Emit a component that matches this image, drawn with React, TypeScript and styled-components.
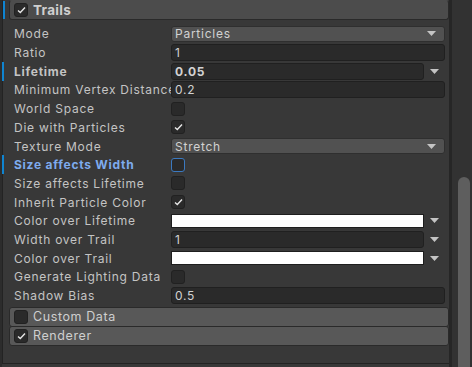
import styled, { createGlobalStyle } from "styled-components";

const Global = createGlobalStyle`
  html, body { margin: 0; padding: 0; background: #383838; }
  body { font-family: Inter, "Noto Sans", sans-serif; }
`;

const Page = styled.div`
  display: flex;
  width: 472px;
  height: 367px;
  overflow: hidden;
  background: #383838;
`;

const Gutter = styled.div`
  width: 2px;
  background: #2c2c2c;
`;

const Inspector = styled.div`
  flex: 1;
  display: flex;
  flex-direction: column;
  border-left: 1px solid #232323;
  border-bottom: 1px solid #232323;
  height: 363px;
  padding-left: 6px;
`;

const Header = styled.div<{ $first?: boolean }>`
  position: relative;
  display: flex;
  align-items: center;
  gap: 5px;
  height: 20px;
  box-sizing: border-box;
  padding-left: 4px;
  background: ${(p) => (p.$first ? "#4c4c4c" : "#585858")};
  border: 1px solid #2a2a2a;
  border-top-color: ${(p) => (p.$first ? "transparent" : "#2a2a2a")};
  border-radius: 3px;
  color: #cfcfcf;
  font-size: ${(p) => (p.$first ? "13.5px" : "12.5px")};
  font-weight: ${(p) => (p.$first ? 700 : 400)};
  letter-spacing: ${(p) => (p.$first ? "0.3px" : "0.6px")};
  & + & {
    margin-top: -1px;
  }
`;

const Marker = styled.span<{ $offset: number }>`
  position: absolute;
  left: ${(p) => -p.$offset}px;
  top: 0;
  bottom: 0;
  width: 2px;
  background: #0f84d0;
`;

const Rows = styled.div`
  display: flex;
  flex-direction: column;
  padding: 4.5px 4px 1.5px 0;
`;

const Row = styled.div`
  position: relative;
  display: flex;
  align-items: center;
  height: 18.71px;
`;

const Label = styled.div<{ $bold?: boolean; $focus?: boolean }>`
  width: 162px;
  flex-shrink: 0;
  padding-left: 5px;
  box-sizing: border-box;
  overflow: hidden;
  white-space: nowrap;
  font-size: 12px;
  letter-spacing: 0.75px;
  color: ${(p) => (p.$focus ? "#7eabee" : "#c4c4c4")};
  font-weight: ${(p) => (p.$bold ? 700 : 400)};
`;

const Field = styled.div<{ $bold?: boolean }>`
  flex: 1;
  display: flex;
  align-items: center;
  height: 17px;
  box-sizing: border-box;
  padding-left: 3px;
  background: #2a2a2a;
  border: 1px solid #202020;
  border-radius: 3px;
  color: #d2d2d2;
  font-size: 12px;
  letter-spacing: 0.75px;
  font-weight: ${(p) => (p.$bold ? 700 : 400)};
`;

const Dropdown = styled(Field)`
  justify-content: space-between;
  padding-right: 8px;
  height: 16px;
  background: #515151;
  border-color: #2f2f2f;
`;

const ColorBar = styled.div`
  flex: 1;
  height: 14px;
  box-sizing: border-box;
  background: #ffffff;
  border: 1px solid #1e1e1e;
`;

const WithCurve = styled.div`
  flex: 1;
  display: flex;
  align-items: center;
  & > svg {
    margin: 0 6px 0 6px;
  }
`;

const Check = styled.div<{ $focus?: boolean }>`
  width: 14px;
  height: 14px;
  box-sizing: border-box;
  display: flex;
  align-items: center;
  justify-content: center;
  background: #2a2a2a;
  border: 1px solid ${(p) => (p.$focus ? "#3b79c0" : "#212121")};
  border-radius: 3px;
`;

const ScrollDivider = styled.div`
  width: 3px;
  background: #262626;
`;

const Track = styled.div`
  width: 20px;
  background: #323232;
  padding-top: 177px;
  box-sizing: border-box;
`;

const Thumb = styled.div`
  margin-left: 6px;
  width: 12px;
  height: 200px;
  background: #5e5e5e;
  border-radius: 6px 6px 0 0;
`;

const Arrow = () => (
  <svg width="9" height="5" viewBox="0 0 9 5">
    <polygon points="0,0 9,0 4.5,5" fill="#c4c4c4" />
  </svg>
);

const Tick = () => (
  <svg width="9" height="8" viewBox="0 0 9 8">
    <polyline
      points="1,4.5 3.3,6.5 8,1.5"
      fill="none"
      stroke="#e6e6e6"
      strokeWidth="1.4"
    />
  </svg>
);

function Toggle({ checked, focus }: { checked?: boolean; focus?: boolean }) {
  return <Check $focus={focus}>{checked && <Tick />}</Check>;
}

export default function App() {
  return (
    <Page>
      <Global />
      <Gutter />
      <Inspector>
        <Header $first>
          <Marker $offset={7} />
          <Toggle checked />
          Trails
        </Header>
        <Rows>
          <Row>
            <Label>Mode</Label>
            <Dropdown>
              Particles
              <Arrow />
            </Dropdown>
          </Row>
          <Row>
            <Label>Ratio</Label>
            <Field>1</Field>
          </Row>
          <Row>
            <Marker $offset={7} />
            <Label $bold>Lifetime</Label>
            <WithCurve>
              <Field $bold>0.05</Field>
              <Arrow />
            </WithCurve>
          </Row>
          <Row>
            <Label>Minimum Vertex Distance</Label>
            <Field>0.2</Field>
          </Row>
          <Row>
            <Label>World Space</Label>
            <Toggle />
          </Row>
          <Row>
            <Label>Die with Particles</Label>
            <Toggle checked />
          </Row>
          <Row>
            <Label>Texture Mode</Label>
            <Dropdown>
              Stretch
              <Arrow />
            </Dropdown>
          </Row>
          <Row>
            <Marker $offset={7} />
            <Label $bold $focus>
              Size affects Width
            </Label>
            <Toggle focus />
          </Row>
          <Row>
            <Label>Size affects Lifetime</Label>
            <Toggle />
          </Row>
          <Row>
            <Label>Inherit Particle Color</Label>
            <Toggle checked />
          </Row>
          <Row>
            <Label>Color over Lifetime</Label>
            <WithCurve>
              <ColorBar />
              <Arrow />
            </WithCurve>
          </Row>
          <Row>
            <Label>Width over Trail</Label>
            <WithCurve>
              <Field>1</Field>
              <Arrow />
            </WithCurve>
          </Row>
          <Row>
            <Label>Color over Trail</Label>
            <WithCurve>
              <ColorBar />
              <Arrow />
            </WithCurve>
          </Row>
          <Row>
            <Label>Generate Lighting Data</Label>
            <Toggle />
          </Row>
          <Row>
            <Label>Shadow Bias</Label>
            <Field>0.5</Field>
          </Row>
        </Rows>
        <Header>
          <Toggle />
          Custom Data
        </Header>
        <Header>
          <Toggle checked />
          Renderer
        </Header>
      </Inspector>
      <ScrollDivider />
      <Track>
        <Thumb />
      </Track>
    </Page>
  );
}
